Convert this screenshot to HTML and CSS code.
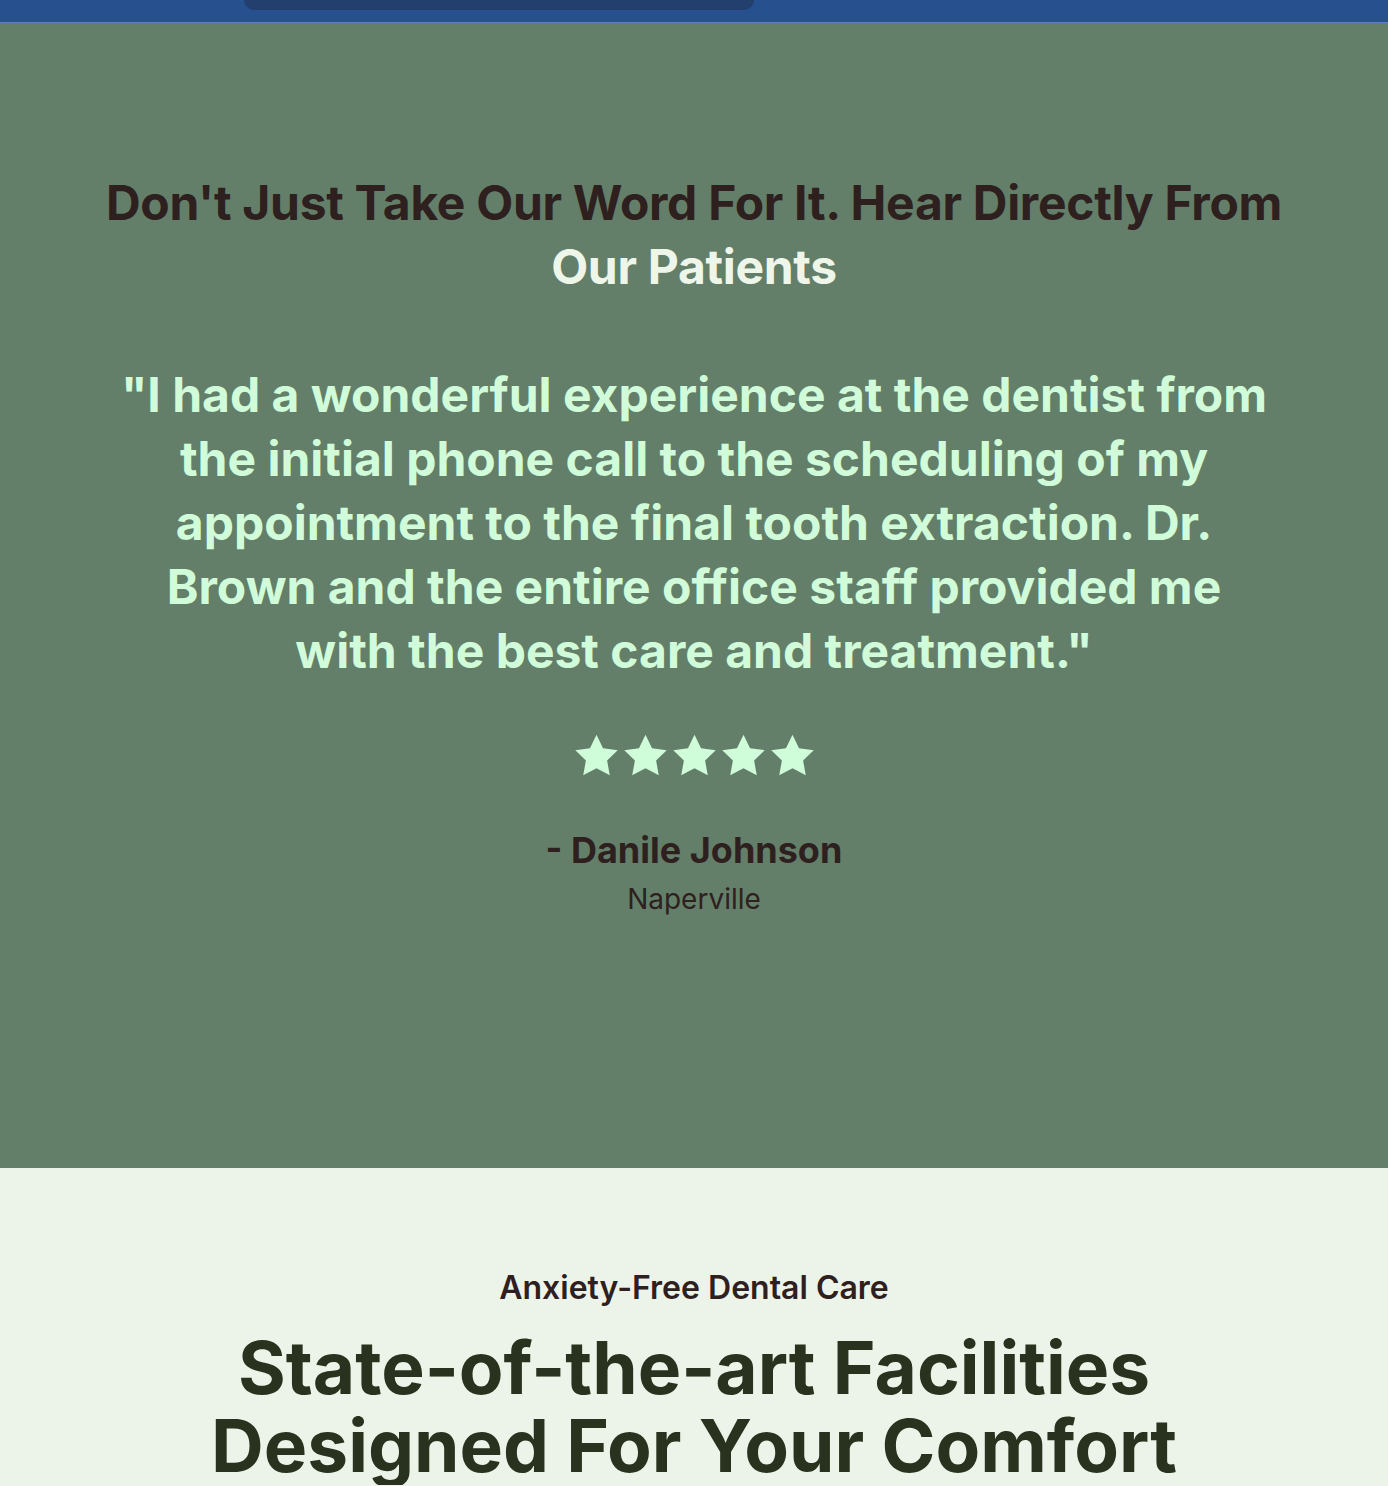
FILE: index.html
```html
<!DOCTYPE html>
<html lang="en">
<head>
<meta charset="utf-8">
<title>Testimonials</title>
<link rel="stylesheet" href="styles.css">
</head>
<body>
<header class="topbar">
  <div class="topbar-tab"></div>
</header>
<section class="testimonials">
  <h2 class="t-heading">Don't Just Take Our Word For It. Hear Directly From <span class="t-light">Our Patients</span></h2>
  <blockquote class="t-quote">"I had a wonderful experience at the dentist from the initial phone call to the scheduling of my appointment to the final tooth extraction. Dr. Brown and the entire office staff provided me with the best care and treatment."</blockquote>
  <div class="stars">
    <svg viewBox="0 0 24 24" class="star"><path d="M12 1.8l3.2 6.6 7.2 1-5.2 5.1 1.3 7.2L12 18.3l-6.5 3.4 1.3-7.2-5.2-5.1 7.2-1z"/></svg>
    <svg viewBox="0 0 24 24" class="star"><path d="M12 1.8l3.2 6.6 7.2 1-5.2 5.1 1.3 7.2L12 18.3l-6.5 3.4 1.3-7.2-5.2-5.1 7.2-1z"/></svg>
    <svg viewBox="0 0 24 24" class="star"><path d="M12 1.8l3.2 6.6 7.2 1-5.2 5.1 1.3 7.2L12 18.3l-6.5 3.4 1.3-7.2-5.2-5.1 7.2-1z"/></svg>
    <svg viewBox="0 0 24 24" class="star"><path d="M12 1.8l3.2 6.6 7.2 1-5.2 5.1 1.3 7.2L12 18.3l-6.5 3.4 1.3-7.2-5.2-5.1 7.2-1z"/></svg>
    <svg viewBox="0 0 24 24" class="star"><path d="M12 1.8l3.2 6.6 7.2 1-5.2 5.1 1.3 7.2L12 18.3l-6.5 3.4 1.3-7.2-5.2-5.1 7.2-1z"/></svg>
  </div>
  <p class="t-name">- Danile Johnson</p>
  <p class="t-city">Naperville</p>
</section>
<section class="facilities">
  <p class="f-eyebrow">Anxiety-Free Dental Care</p>
  <h2 class="f-heading">State-of-the-art Facilities Designed For Your Comfort</h2>
</section>
</body>
</html>
```
FILE: styles.css
```css
* { box-sizing: border-box; }
html, body { margin: 0; padding: 0; }
body {
  font-family: Inter, "Noto Sans", "Liberation Sans", sans-serif;
  background: #ecf4e9;
}
.topbar {
  height: 23px;
  background: #27508f;
  border-bottom: 1px solid #5a7fbd;
  padding-left: 244px;
}
.topbar-tab {
  width: 510px;
  height: 10px;
  background: #223f6e;
  border-radius: 0 0 18px 18px;
}
.testimonials {
  background: #637f69;
  height: 1145px;
  padding: 148px 100px 0;
  text-align: center;
}
.t-heading {
  margin: 0 auto;
  max-width: 1200px;
  font-size: 48px;
  line-height: 64px;
  font-weight: 700;
  color: #2f2020;
  letter-spacing: -0.3px;
}
.t-light { color: #eef6ea; }
.t-quote {
  margin: 64px auto 0;
  max-width: 1150px;
  font-size: 48px;
  line-height: 64px;
  font-weight: 700;
  color: #d0fcd9;
  letter-spacing: 0;
}
.stars {
  margin-top: 48px;
  display: flex;
  justify-content: center;
  gap: 0;
}
.star {
  width: 49px;
  height: 49px;
  fill: #cffcd9;
}
.t-name {
  margin: 46px 0 0;
  font-size: 36px;
  line-height: 48px;
  font-weight: 700;
  color: #2f2020;
}
.t-city {
  margin: 8px 0 0;
  font-size: 28px;
  line-height: 34px;
  font-weight: 400;
  color: #2f2020;
}
.facilities {
  text-align: center;
  padding: 98px 100px 0;
}
.f-eyebrow {
  margin: 0;
  font-size: 32px;
  line-height: 44px;
  font-weight: 600;
  color: #2f2020;
}
.f-heading {
  margin: 19px auto 0;
  max-width: 1000px;
  font-size: 73px;
  line-height: 78px;
  font-weight: 700;
  color: #28321e;
}
```
